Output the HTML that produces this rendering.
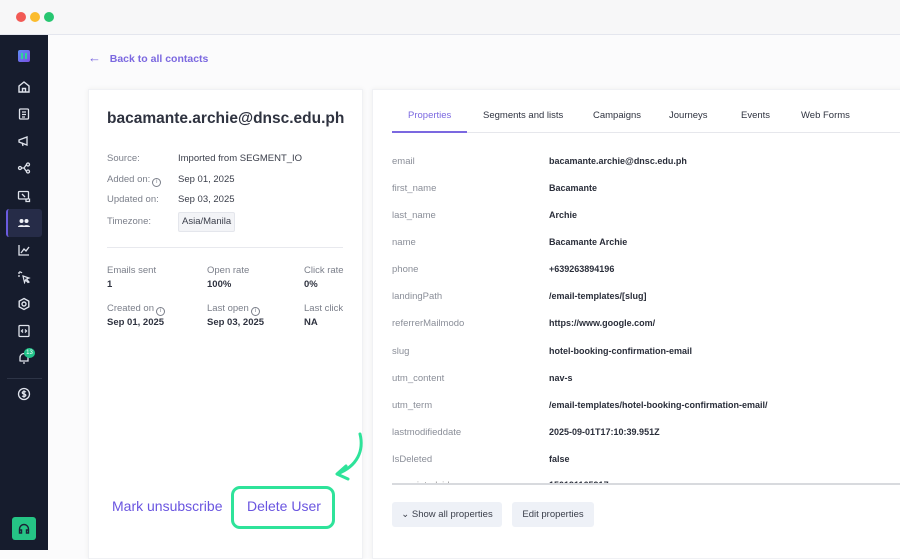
<!DOCTYPE html>
<html><head><style>
*{margin:0;padding:0;box-sizing:border-box}
body{width:900px;height:550px;overflow:hidden;background:#fbfbfc;font-family:"Liberation Sans",sans-serif;position:relative}
.top{position:absolute;left:0;top:0;width:900px;height:35px;background:#f7f7f8;border-bottom:1px solid #e4e6ee}
.dot{position:absolute;top:12px;width:10px;height:10px;border-radius:50%}
.side{position:absolute;left:0;top:35px;width:48px;height:515px;background:#161c2d}
.ic{position:absolute;left:17px;width:14px;height:14px}
.card{position:absolute;background:#fff;box-shadow:0 0 5px rgba(0,0,0,0.06);border:1px solid #f0f1f4}
.lbl{position:absolute;font-size:9.5px;color:#7b7f8a;line-height:12px;white-space:nowrap}
.val{position:absolute;font-size:9.5px;color:#3a3e4a;line-height:12px;white-space:nowrap}
.i{display:inline-block;width:9px;height:9px;border:1px solid #7b7f8a;border-radius:50%;vertical-align:-1px;margin-left:2px;font-size:6px;line-height:7px;text-align:center}
.b{font-weight:bold;color:#2f3340}
.tab{position:absolute;top:110px;font-size:9.5px;color:#2f3340}
.pk{position:absolute;left:392px;font-size:9.5px;color:#8a8e98;white-space:nowrap}
.pv{position:absolute;left:549px;font-size:9px;color:#2a2e3a;font-weight:bold;white-space:nowrap}
.btn{position:absolute;top:502px;height:25px;background:#eef1f7;border-radius:3px;font-size:9.5px;color:#3a3e4a;line-height:25px;text-align:center}
</style></head><body>
<div class="top">
<div class="dot" style="left:16px;background:#f25a55"></div>
<div class="dot" style="left:30px;background:#fbbc2e"></div>
<div class="dot" style="left:44px;background:#27c671"></div>
</div>
<div class="side">
<div style="position:absolute;left:18px;top:15px;width:12px;height:12px;background:linear-gradient(135deg,#5b8df5,#7b4fe0);border-radius:2px"></div>
<div style="position:absolute;left:21px;top:18px;width:1.5px;height:6px;background:#2fd39a"></div>
<div style="position:absolute;left:25px;top:18px;width:1.5px;height:6px;background:#2fd39a"></div>
<svg class="ic" style="top:45px" viewBox="0 0 14 14" fill="none" stroke="#dfe3ec" stroke-width="1.4"><path d="M2 6L7 2L12 6V12H2Z M5.5 12V8.5H8.5V12"/></svg>
<svg class="ic" style="top:72px" viewBox="0 0 14 14" fill="none" stroke="#dfe3ec" stroke-width="1.3"><rect x="2.5" y="2" width="9" height="10" rx="1"/><path d="M5 5H9M5 7.5H9M5 10H8"/></svg>
<svg class="ic" style="top:99px" viewBox="0 0 14 14" fill="none" stroke="#dfe3ec" stroke-width="1.3"><path d="M2 6L10 3V11L2 8Z M5 8.5L6 12"/></svg>
<svg class="ic" style="top:126px" viewBox="0 0 14 14" fill="none" stroke="#dfe3ec" stroke-width="1.3"><circle cx="3" cy="7" r="1.5"/><circle cx="11" cy="3.5" r="1.5"/><circle cx="11" cy="10.5" r="1.5"/><path d="M4.5 7H7L9.5 3.5M7 7L9.5 10.5"/></svg>
<svg class="ic" style="top:154px" viewBox="0 0 14 14" fill="none" stroke="#dfe3ec" stroke-width="1.3"><rect x="1.5" y="2.5" width="10" height="7.5" rx="1"/><path d="M5 5L8 8M9 10V12.5H12.5V9.5"/></svg>
<div style="position:absolute;left:6px;top:174px;width:36px;height:28px;background:#262c48;border-radius:3px;border-left:2px solid #6a5be0"></div>
<svg class="ic" style="top:181px" viewBox="0 0 14 14" fill="#eef0f6"><circle cx="4.5" cy="5" r="2"/><circle cx="9.5" cy="5" r="2"/><path d="M1 11C1 8.5 8 8.5 8 11Z M6 11C6 8.5 13 8.5 13 11Z"/></svg>
<svg class="ic" style="top:208px" viewBox="0 0 14 14" fill="none" stroke="#dfe3ec" stroke-width="1.3"><path d="M2 2V12H12 M4 10L7 6L9 8L12 4"/></svg>
<svg class="ic" style="top:235px" viewBox="0 0 14 14" fill="none" stroke="#dfe3ec" stroke-width="1.2"><path d="M6 6L12 8L9.5 9L12 12L11 12.5L8.5 10L7.5 12.5Z M3 1V3M1 3H3M5 2L4 3M1 6H3"/></svg>
<svg class="ic" style="top:262px" viewBox="0 0 14 14" fill="none" stroke="#dfe3ec" stroke-width="1.4"><circle cx="7" cy="7" r="2"/><path d="M7 1.5L11.8 4.2V9.8L7 12.5L2.2 9.8V4.2Z"/></svg>
<svg class="ic" style="top:289px" viewBox="0 0 14 14" fill="none" stroke="#dfe3ec" stroke-width="1.3"><rect x="2" y="1.5" width="10" height="11" rx="1"/><path d="M6 5.5L4.5 7L6 8.5M8 5.5L9.5 7L8 8.5"/></svg>
<svg class="ic" style="top:316px" viewBox="0 0 14 14" fill="none" stroke="#dfe3ec" stroke-width="1.3"><path d="M3 10V6.5A4 4 0 0 1 11 6.5V10H2.5 M6 12H8"/></svg>
<div style="position:absolute;left:24px;top:313px;width:11px;height:10px;border-radius:50%;background:#22c38a;font-size:6px;color:#fff;text-align:center;line-height:10px">13</div>
<div style="position:absolute;left:7px;top:343px;width:35px;height:1px;background:#2d3446"></div>
<svg class="ic" style="top:352px" viewBox="0 0 14 14" fill="none" stroke="#dfe3ec" stroke-width="1.3"><circle cx="7" cy="7" r="5.5"/><path d="M8.8 5.2C8.3 4.4 5.3 4.2 5.3 5.7C5.3 7.2 8.8 6.6 8.8 8.3C8.8 9.8 5.7 9.7 5.2 8.8M7 3.3V10.7"/></svg>
<div style="position:absolute;left:12px;top:482px;width:24px;height:23px;background:#25c485;border-radius:3px"></div>
<svg style="position:absolute;left:18px;top:488px;width:12px;height:11px" viewBox="0 0 12 11" fill="none" stroke="#1b2236" stroke-width="1.4"><path d="M1.5 8V6A4.5 4.5 0 0 1 10.5 6V8 M1.5 7H3.5V10H1.5Z M8.5 7H10.5V10H8.5Z"/></svg>
</div>
<div style="position:absolute;left:88px;top:50px;font-size:10.5px;color:#7b68e0;font-weight:bold;white-space:nowrap"><span style="font-size:13px;font-weight:normal">←</span>&nbsp;&nbsp;&nbsp;Back to all contacts</div>

<div class="card" style="left:88px;top:89px;width:275px;height:470px"></div>
<div style="position:absolute;left:107px;top:110px;font-size:15.5px;font-weight:bold;color:#2f3340;white-space:nowrap">bacamante.archie@dnsc.edu.ph</div>
<div class="lbl" style="left:107px;top:153px">Source:</div><div class="val" style="left:178px;top:153px">Imported from SEGMENT_IO</div>
<div class="lbl" style="left:107px;top:174px">Added on:<span class="i">i</span></div><div class="val" style="left:178px;top:174px">Sep 01, 2025</div>
<div class="lbl" style="left:107px;top:194px">Updated on:</div><div class="val" style="left:178px;top:194px">Sep 03, 2025</div>
<div class="lbl" style="left:107px;top:216px">Timezone:</div>
<div class="val" style="left:178px;top:212px;background:#f3f4f7;border:1px solid #e4e6ec;padding:3px 3px;border-radius:2px">Asia/Manila</div>
<div style="position:absolute;left:107px;top:247px;width:236px;height:1px;background:#e8e9ee"></div>
<div class="lbl" style="left:107px;top:265px">Emails sent</div><div class="val b" style="left:107px;top:279px">1</div>
<div class="lbl" style="left:207px;top:265px">Open rate</div><div class="val b" style="left:207px;top:279px">100%</div>
<div class="lbl" style="left:304px;top:265px">Click rate</div><div class="val b" style="left:304px;top:279px">0%</div>
<div class="lbl" style="left:107px;top:303px">Created on<span class="i">i</span></div><div class="val b" style="left:107px;top:317px">Sep 01, 2025</div>
<div class="lbl" style="left:207px;top:303px">Last open<span class="i">i</span></div><div class="val b" style="left:207px;top:317px">Sep 03, 2025</div>
<div class="lbl" style="left:304px;top:303px">Last click</div><div class="val b" style="left:304px;top:317px">NA</div>

<div style="position:absolute;left:112px;top:498px;font-size:14px;color:#6a55e0;white-space:nowrap">Mark unsubscribe</div>
<div style="position:absolute;left:231px;top:486px;width:104px;height:43px;border:3px solid #2ee39a;border-radius:9px"></div>
<div style="position:absolute;left:247px;top:498px;font-size:14px;color:#6a55e0;white-space:nowrap">Delete User</div>
<svg style="position:absolute;left:328px;top:430px;width:40px;height:55px" viewBox="0 0 40 55" fill="none" stroke="#2ee39a" stroke-width="3" stroke-linecap="round"><path d="M32 4C36 20 30 36 9 44 M9 44L18 36 M9 44L20 49"/></svg>

<div class="card" style="left:372px;top:89px;width:540px;height:470px"></div>
<div class="tab" style="left:408px;color:#7b68e0">Properties</div>
<div class="tab" style="left:483px">Segments and lists</div>
<div class="tab" style="left:593px">Campaigns</div>
<div class="tab" style="left:669px">Journeys</div>
<div class="tab" style="left:741px">Events</div>
<div class="tab" style="left:801px">Web Forms</div>
<div style="position:absolute;left:392px;top:132px;width:508px;height:1px;background:#e6e7ec"></div>
<div style="position:absolute;left:392px;top:131px;width:75px;height:2px;background:#7b68e0"></div>

<div class="pk" style="top:156px">email</div><div class="pv" style="top:156px">bacamante.archie@dnsc.edu.ph</div>
<div class="pk" style="top:183px">first_name</div><div class="pv" style="top:183px">Bacamante</div>
<div class="pk" style="top:210px">last_name</div><div class="pv" style="top:210px">Archie</div>
<div class="pk" style="top:237px">name</div><div class="pv" style="top:237px">Bacamante Archie</div>
<div class="pk" style="top:264px">phone</div><div class="pv" style="top:264px">+639263894196</div>
<div class="pk" style="top:291px">landingPath</div><div class="pv" style="top:291px">/email-templates/[slug]</div>
<div class="pk" style="top:318px">referrerMailmodo</div><div class="pv" style="top:318px">https://www.google.com/</div>
<div class="pk" style="top:346px">slug</div><div class="pv" style="top:346px">hotel-booking-confirmation-email</div>
<div class="pk" style="top:373px">utm_content</div><div class="pv" style="top:373px">nav-s</div>
<div class="pk" style="top:400px">utm_term</div><div class="pv" style="top:400px">/email-templates/hotel-booking-confirmation-email/</div>
<div class="pk" style="top:427px">lastmodifieddate</div><div class="pv" style="top:427px">2025-09-01T17:10:39.951Z</div>
<div class="pk" style="top:454px">IsDeleted</div><div class="pv" style="top:454px">false</div>
<div style="position:absolute;left:392px;top:478px;width:508px;height:6px;overflow:hidden"><div class="pk" style="left:0;top:2px;color:#999">associatedcid</div><div class="pv" style="left:157px;top:2px">150191165917</div></div>
<div style="position:absolute;left:392px;top:483px;width:508px;height:2px;background:#d8dade"></div>
<div class="btn" style="left:392px;width:110px">⌄ Show all properties</div>
<div class="btn" style="left:512px;width:82px">Edit properties</div>
</body></html>
